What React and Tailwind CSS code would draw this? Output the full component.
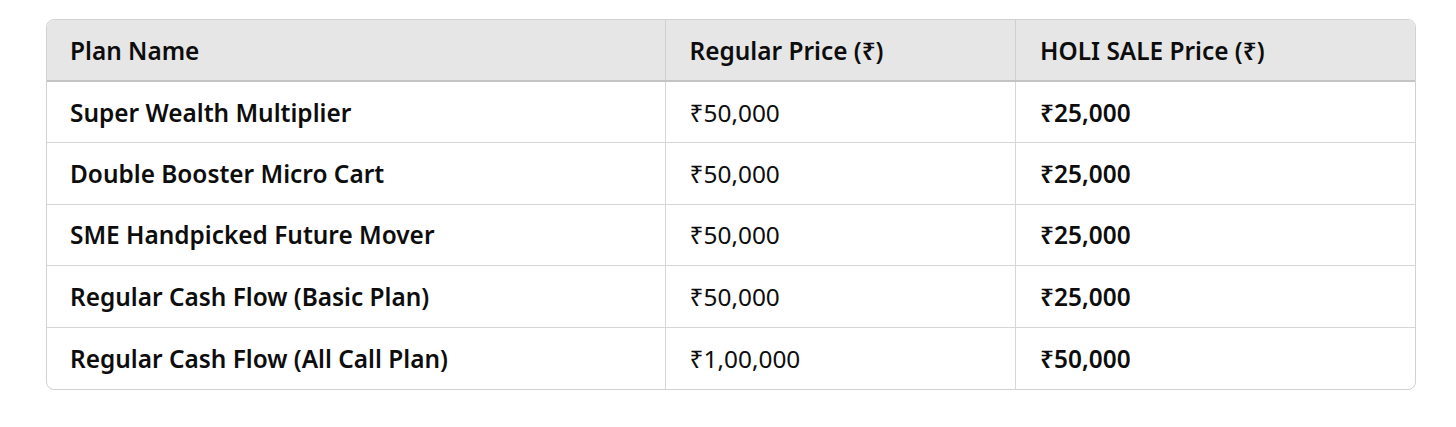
export default function App() {
  const rows = [
    ["Super Wealth Multiplier", "₹50,000", "₹25,000"],
    ["Double Booster Micro Cart", "₹50,000", "₹25,000"],
    ["SME Handpicked Future Mover", "₹50,000", "₹25,000"],
    ["Regular Cash Flow (Basic Plan)", "₹50,000", "₹25,000"],
    ["Regular Cash Flow (All Call Plan)", "₹1,00,000", "₹50,000"],
  ];
  return (
    <div className="w-[1456px] h-[427px] bg-white pl-[46px] pt-[19px]" style={{ fontFamily: '"Noto Sans", "DejaVu Sans", sans-serif' }}>
      <div className="w-[1370px] rounded-[8px] border border-[#d2d2d2] overflow-hidden">
        <table className="w-full border-collapse text-[24.4px] text-[#0d0d0d]">
          <colgroup>
            <col className="w-[619px]" />
            <col className="w-[351px]" />
            <col className="w-[400px]" />
          </colgroup>
          <thead>
            <tr className="bg-[#e6e6e6] h-[61px] border-b-2 border-[#c4c4c4]">
              <th className="text-left font-semibold pl-[23px] pt-[3px] border-r border-[#cfcfcf]">Plan Name</th>
              <th className="text-left font-semibold pl-[24px] pt-[3px] border-r border-[#cfcfcf]">Regular Price (₹)</th>
              <th className="text-left font-semibold pl-[24px] pt-[3px]">HOLI SALE Price (₹)</th>
            </tr>
          </thead>
          <tbody>
            {rows.map((r, i) => (
              <tr key={i} className={`h-[61.5px] ${i < rows.length - 1 ? "border-b border-[#d6d6d6]" : ""}`}>
                <td className="pl-[23px] pt-[2px] font-semibold border-r border-[#d6d6d6]">{r[0]}</td>
                <td className="pl-[24px] pt-[2px] font-normal border-r border-[#d6d6d6]">{r[1]}</td>
                <td className="pl-[24px] pt-[2px] font-semibold">{r[2]}</td>
              </tr>
            ))}
          </tbody>
        </table>
      </div>
    </div>
  );
}
